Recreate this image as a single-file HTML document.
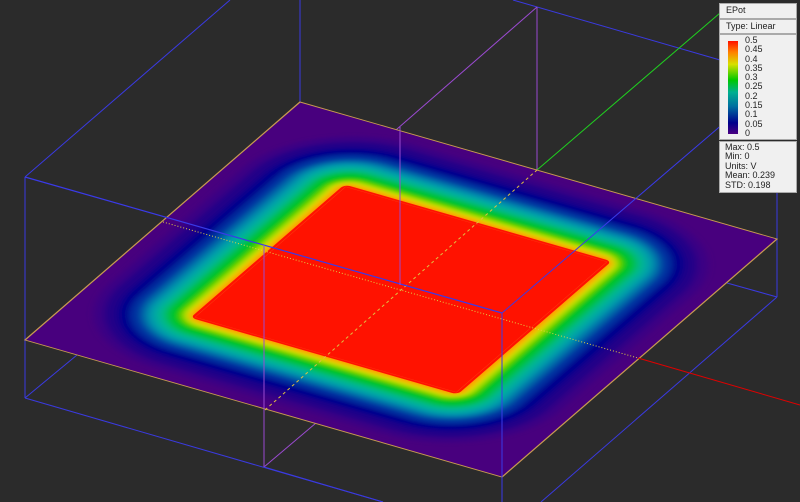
<!DOCTYPE html>
<html><head><meta charset="utf-8"><style>
html,body{margin:0;padding:0;background:#2b2b2b;width:800px;height:502px;overflow:hidden}
svg{position:absolute;left:0;top:0}
#leg{position:absolute;left:719px;top:3px;width:78px;height:189px;font-family:"Liberation Sans",sans-serif;font-size:9px;color:#222}
.b{position:absolute;left:0;width:76px;background:#f0f0f0;border:1px solid #aaa}
</style></head><body>
<svg width="800" height="502" viewBox="0 0 800 502">
<defs>
<filter id="bl" x="-20%" y="-20%" width="140%" height="140%"><feGaussianBlur stdDeviation="0.7"/></filter>
</defs>
<g stroke-width="1" fill="none">
<line x1="230" y1="0" x2="25" y2="177" stroke="#3a3ae0"/>
<line x1="25" y1="177" x2="25" y2="398" stroke="#3a3ae0"/>
<line x1="300" y1="0" x2="300" y2="102" stroke="#3a3ae0"/>
<line x1="513" y1="0" x2="720" y2="60" stroke="#3a3ae0"/>
<line x1="777" y1="180" x2="777" y2="297" stroke="#3a3ae0"/>
<line x1="727" y1="283" x2="777" y2="297" stroke="#3a3ae0"/>
<line x1="25" y1="398" x2="383" y2="502" stroke="#3a3ae0"/>
<line x1="25" y1="398" x2="77" y2="355" stroke="#3a3ae0"/>
<line x1="777" y1="297" x2="541" y2="502" stroke="#3a3ae0"/>
<line x1="537" y1="7" x2="264" y2="245" stroke="#9a4ad0"/>
<line x1="537" y1="7" x2="537" y2="170" stroke="#9a4ad0"/>
<line x1="537" y1="170" x2="720" y2="13" stroke="#20d020"/>
<line x1="264" y1="467" x2="316" y2="423" stroke="#9a4ad0"/>
</g>
<g transform="matrix(2.75,-2.38,4.77,1.37,25,340)">
<rect x="0" y="0" width="100" height="100" fill="#48007e"/>
<g filter="url(#bl)">
<rect x="3" y="3" width="94" height="94" rx="23" fill="#3a0084"/>
<rect x="5" y="5" width="90" height="90" rx="21" fill="#200088"/>
<rect x="7.5" y="7.5" width="85" height="85" rx="18" fill="#02008e"/>
<rect x="10" y="10" width="80" height="80" rx="15" fill="#0030a0"/>
<rect x="12" y="12" width="76" height="76" rx="13" fill="#0070aa"/>
<rect x="13.5" y="13.5" width="73" height="73" rx="11" fill="#00a0aa"/>
<rect x="15" y="15" width="70" height="70" rx="9.5" fill="#00b890"/>
<rect x="16.5" y="16.5" width="67" height="67" rx="8" fill="#00c040"/>
<rect x="18" y="18" width="64" height="64" rx="6.5" fill="#00c800"/>
<rect x="19.6" y="19.6" width="60.8" height="60.8" rx="5" fill="#a0e000"/>
<rect x="20.6" y="20.6" width="58.8" height="58.8" rx="3.8" fill="#f0e000"/>
<rect x="21.3" y="21.3" width="57.4" height="57.4" rx="2.6" fill="#ff9000"/>
</g>
<rect x="22" y="22" width="56" height="56" rx="1.2" fill="#ff1200"/>
<rect x="22.6" y="22.6" width="54.8" height="54.8" fill="none" stroke="#ff3a10" stroke-width="0.12"/>
<rect x="0" y="0" width="100" height="100" fill="none" stroke="#c89a50" stroke-width="0.3"/>
</g>
<g fill="none" stroke-width="1">
<line x1="163" y1="222" x2="638" y2="358" stroke="#e0d040" stroke-dasharray="1,2"/>
<line x1="265" y1="410" x2="537" y2="170" stroke="#e0c040" stroke-dasharray="3,3"/>
<line x1="638" y1="358" x2="800" y2="405" stroke="#e00000"/>
<line x1="25" y1="177" x2="502" y2="313" stroke="#3a3ae8" stroke-width="1.2"/>
<line x1="502" y1="313" x2="724" y2="123" stroke="#3a3ae8"/>
<line x1="502" y1="313" x2="502" y2="502" stroke="#3a3ae8"/>
<line x1="264" y1="245" x2="264" y2="467" stroke="#9a4ad0"/>
<line x1="400" y1="127" x2="400" y2="285" stroke="#9a4ad0"/>
<line x1="264" y1="467" x2="383" y2="502" stroke="#3a3ae0"/>
</g>
</svg>
<div id="leg">
<div class="b" style="top:0;height:14px"><span style="position:absolute;left:6px;top:1px">EPot</span></div>
<div class="b" style="top:16px;height:13px"><span style="position:absolute;left:6px;top:1px">Type: Linear</span></div>
<div class="b" style="top:31px;height:104px">
<div style="position:absolute;left:8px;top:6px;width:10px;height:93px;background:linear-gradient(to top,#4b0082,#00008c 12%,#0070a0 30%,#00b090 45%,#00c800 58%,#d8e000 75%,#ff8000 88%,#ff1000)"></div>
<div style="position:absolute;left:25px;top:1px;line-height:9.3px">0.5<br>0.45<br>0.4<br>0.35<br>0.3<br>0.25<br>0.2<br>0.15<br>0.1<br>0.05<br>0</div>
</div>
<div class="b" style="top:138px;height:50px"><div style="position:absolute;left:5px;top:1px;line-height:9.4px">Max: 0.5<br>Min: 0<br>Units: V<br>Mean: 0.239<br>STD: 0.198</div></div>
</div>
</body></html>
